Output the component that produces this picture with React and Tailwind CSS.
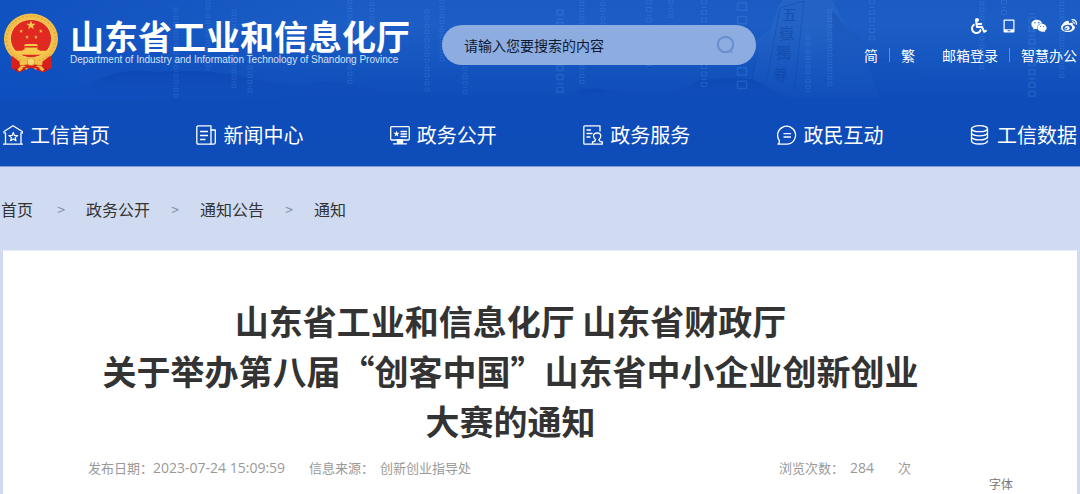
import { Fragment } from 'react';
import { FaWeibo, FaWeixin, FaWheelchair } from 'react-icons/fa';

const DIGIT_COLUMNS = [
  { x: 176, y: 8, h: 90, s: 4 },
  { x: 208, y: 0, h: 70, s: 4 },
  { x: 234, y: 10, h: 80, s: 4 },
  { x: 250, y: 60, h: 34, s: 4 },
  { x: 350, y: 0, h: 84, s: 4 },
  { x: 372, y: 0, h: 30, s: 4 },
  { x: 427, y: 10, h: 84, s: 4 },
  { x: 442, y: 0, h: 60, s: 4 },
  { x: 465, y: 30, h: 62, s: 4 },
  { x: 560, y: 10, h: 80, s: 6 },
  { x: 582, y: 0, h: 84, s: 4 },
  { x: 603, y: 0, h: 40, s: 4 },
  { x: 649, y: 0, h: 66, s: 5 },
  { x: 671, y: 0, h: 20, s: 4 },
  { x: 704, y: 0, h: 84, s: 5 },
  { x: 742, y: 3, h: 84, s: 9 },
  { x: 808, y: 36, h: 56, s: 4 },
  { x: 830, y: 10, h: 76, s: 4 },
  { x: 872, y: 0, h: 42, s: 5 },
  { x: 982, y: 2, h: 66, s: 4 },
  { x: 1004, y: 0, h: 18, s: 5 },
  { x: 1032, y: 14, h: 84, s: 6 },
  { x: 1062, y: 0, h: 76, s: 4 },
];

const STARS = [
  [30, 25, 5],
  [20, 31, 2],
  [40, 31, 2],
  [26, 37, 2],
  [35, 37, 2],
];

function starPoints(cx, cy, r) {
  const points = [];
  for (let i = 0; i < 10; i++) {
    const radius = i % 2 ? r * 0.42 : r;
    const angle = (Math.PI / 5) * i - Math.PI / 2;
    points.push(`${cx + radius * Math.cos(angle)},${cy + radius * Math.sin(angle)}`);
  }
  return points.join(' ');
}

// Rings and bars stacked down a column, like binary digits lying on their side
function digitPath({ x, y, h, s }) {
  let d = '';
  let top = y;
  for (let i = 0; top < y + h; i++) {
    if ((i + x) % 3 === 0) {
      d += `M${x - s / 2} ${top} h${s} `;
      top += s * 0.6;
    } else {
      d += `M${x - s / 2} ${top} h${s} v${s * 0.8} h${-s} Z `;
      top += s * 1.5;
    }
  }
  return d;
}

function HeaderBackdrop() {
  return (
    <svg
      className="absolute inset-0 h-full w-full"
      viewBox="0 0 1080 166"
      preserveAspectRatio="none"
      aria-hidden="true"
    >
      <defs>
        <linearGradient id="sky" x1="0" y1="0" x2="0" y2="1">
          <stop offset="0" stopColor="#1a5bc4" />
          <stop offset="0.15" stopColor="#1c5ec5" />
          <stop offset="0.6" stopColor="#0e4cba" />
          <stop offset="1" stopColor="#0e4cb8" />
        </linearGradient>
        <linearGradient id="left" x1="0" y1="0" x2="1" y2="0">
          <stop offset="0" stopColor="#0e4fc0" stopOpacity="0.8" />
          <stop offset="1" stopColor="#0e4fc0" stopOpacity="0" />
        </linearGradient>
        <linearGradient id="hill" x1="0" y1="0" x2="0" y2="1">
          <stop offset="0" stopColor="#0b43b0" stopOpacity="0.6" />
          <stop offset="1" stopColor="#0e4cb8" stopOpacity="0" />
        </linearGradient>
        <linearGradient id="rock" x1="0" y1="0" x2="0" y2="1">
          <stop offset="0" stopColor="#4079c6" stopOpacity="0.28" />
          <stop offset="1" stopColor="#2a68c4" stopOpacity="0.08" />
        </linearGradient>
      </defs>
      <rect width="1080" height="166" fill="url(#sky)" />
      <rect width="360" height="100" fill="url(#left)" />

      {/* Distant ridges */}
      <path d="M90 84 Q120 66 160 72 Q200 68 240 76 Q290 90 320 82 Q350 80 380 92 L400 100 H60 Z" fill="url(#hill)" />
      <path d="M570 98 Q580 86 600 89 Q625 94 650 99 Z" fill="url(#hill)" />
      <path d="M660 98 Q685 88 700 80 Q740 76 755 80 Q780 92 800 100 Z" fill="url(#hill)" />

      {/* Carved stone */}
      <path d="M756 40 L770 30 L779 5 L783 0 H832 L846 26 L858 40 L866 60 L880 98 H790 L754 80 Z" fill="url(#rock)" />
      <path d="M832 10 L846 26 L858 38 L866 60 Q890 54 906 66 Q926 66 950 98 H832 Z" fill="url(#hill)" opacity="0.6" />
      <path d="M780 8 L804 1 M804 1 L794 92 M766 84 L780 8 M758 52 L752 78" fill="none" stroke="#0d47b0" strokeWidth="1" opacity="0.5" />
      <g fill="#0c3f9f" opacity="0.5" fontSize="15" fontFamily="'Noto Sans CJK TC', sans-serif">
        <text x="782" y="20">五</text>
        <text x="779" y="39">嶽</text>
        <text x="776" y="58">獨</text>
        <text x="773" y="80">尊</text>
      </g>

      {/* Falling digits */}
      <g fill="none" stroke="#5da0e6" strokeOpacity="0.22">
        {DIGIT_COLUMNS.map((column) => (
          <path key={column.x} d={digitPath(column)} strokeWidth={column.s > 5 ? 1.5 : 1} />
        ))}
      </g>
    </svg>
  );
}

function Emblem() {
  return (
    <svg className="h-16 w-14 shrink-0" viewBox="2 10 57 64" role="img" aria-label="国徽">
      <path d="M11 53 L10 68 L18 73 L30 68 L43 73 L52 68 L50 53 Z" fill="#d81f1c" />
      <path d="M13 62 L16 71 M48 62 L45 71" stroke="#a50f12" strokeWidth="2" />
      <ellipse cx="30.500" cy="39" rx="27.500" ry="26" fill="#f2c14c" />
      <ellipse cx="30.500" cy="39" rx="25" ry="23.500" fill="none" stroke="#e6ab38" strokeWidth="2" strokeDasharray="2 2" />
      <ellipse cx="30.500" cy="38.500" rx="21" ry="19.500" fill="#e02a21" stroke="#f8d66d" strokeWidth="1" />
      {STARS.map(([x, y, r]) => (
        <polygon key={`${x}-${y}`} points={starPoints(x + 0.5, y, r)} fill="#f7c84a" />
      ))}
      <path d="M25 44 H36 L38 46 H23 Z M24 47 H37 V50 H24 Z M22 50 H39 V54 H22 Z" fill="#f7c84a" />
      <path d="M24 47.500 H37" stroke="#c9421f" strokeWidth="0.700" />
      <path d="M13 51 H48 Q44 55 41 55 H20 Q16 54 13 51 Z" fill="#f7c84a" />
      <path d="M11 56 Q18 62 24 65 L18 70 L10 68 Z M50 56 Q43 62 37 65 L43 70 L52 68 Z" fill="#d81f1c" />
      <path d="M19 64 L25 63 Q30 56 36 63 L42 64" fill="none" stroke="#f2c14c" strokeWidth="4" />
      <circle cx="30.500" cy="62" r="4" fill="#f8d66d" stroke="#dc9a2c" strokeWidth="1" />
      <path d="M18 71 Q22 65 27 69 M43 71 Q39 65 34 69" fill="none" stroke="#f2c14c" strokeWidth="3" />
      <path d="M22 69 Q30 65 39 69" fill="none" stroke="#d81f1c" strokeWidth="2" />
    </svg>
  );
}

function NavIcon({ children }) {
  return (
    <svg
      className="h-5 w-5 shrink-0"
      viewBox="0 0 20 20"
      fill="none"
      stroke="currentColor"
      strokeWidth="1.3"
      strokeLinejoin="round"
      strokeLinecap="round"
      aria-hidden="true"
    >
      {children}
    </svg>
  );
}

const NAV = [
  {
    label: '工信首页',
    icon: (
      <NavIcon>
        <path d="M1 8 V6.500 L10 0.700 L19.300 6.500 V8 M2.500 8 V19 M18 8 V19 M0.500 19.200 H19.500" />
        <polygon points={starPoints(10.3, 12, 4.6)} strokeWidth="1.2" />
      </NavIcon>
    ),
  },
  {
    label: '新闻中心',
    icon: (
      <NavIcon>
        <path d="M2.500 0.800 H15 V19.200 H2.500 Q0.800 19.200 0.800 17.500 V2.500 Q0.800 0.800 2.500 0.800 Z" />
        <path d="M15 5 H19.300 V17.500 Q19.300 19.200 17.600 19.200 H15 M4.500 6.500 H11.500 M4.500 10.500 H11.500 M4.500 14.500 H9" />
      </NavIcon>
    ),
  },
  {
    label: '政务公开',
    icon: (
      <NavIcon>
        <rect x="0.700" y="1.700" width="18.600" height="13.300" rx="1" />
        <polygon points={starPoints(6.5, 8.8, 3.2)} fill="currentColor" stroke="none" />
        <path d="M11 6.500 H16.500 M11 9 H16.500 M11 11.500 H16.500" />
        <path d="M7.500 15 H12.500 V18 H7.500 Z" fill="currentColor" />
        <path d="M3.500 18.800 H16.500" />
      </NavIcon>
    ),
  },
  {
    label: '政务服务',
    icon: (
      <NavIcon>
        <path d="M17 6 V0.800 H1.800 Q0.800 0.800 0.800 1.800 V18.200 Q0.800 19.200 1.800 19.200 H8.500 M4 5 H7.500 M4 8.500 H9 M4 12 H7" />
        <path d="M12.500 14.500 Q10.500 13 10.500 11 Q10.500 8 14.200 8 Q17.800 8 17.800 11 Q17.800 13 16 14.500 Q16 16.500 19.300 17 V19.200 H9.500 V17 Q12.500 16.500 12.500 14.500 Z" />
      </NavIcon>
    ),
  },
  {
    label: '政民互动',
    icon: (
      <NavIcon>
        <path d="M2.300 15.500 A9 9 0 1 1 10 19.200 H1 Q2.800 17.500 2.300 15.500" />
        <path d="M7 8.700 H13.500 M7 12 H13.500" />
      </NavIcon>
    ),
  },
  {
    label: '工信数据',
    icon: (
      <NavIcon>
        <ellipse cx="9.500" cy="3.700" rx="8" ry="3" />
        <path d="M1.500 3.700 V15.800 Q2 19 9.500 19 Q17 19 17.500 15.800 M17.500 3.700 V13 M1.500 8 Q2.500 10.800 9.500 10.800 Q16.500 10.800 17.500 8 M1.500 12 Q2.500 14.900 9.500 14.900 Q16.500 14.900 17.500 12" />
      </NavIcon>
    ),
  },
];

const CRUMBS = ['首页', '政务公开', '通知公告', '通知'];

function Divider() {
  return <span className="h-[14px] w-px bg-[#4f93d8]" />;
}

function Header() {
  return (
    <header className="relative border-b border-[#7d9cd8] bg-[#0e4cb8] text-white">
      <HeaderBackdrop />

      <div className="relative flex h-[104px] items-start px-[3px]">
        <div className="flex items-center gap-[11px] pt-[10px]">
          <Emblem />
          <div>
            <div className="text-[34px] leading-9 font-bold">山东省工业和信息化厅</div>
            <div className="font-['Liberation_Sans',sans-serif] text-[10px] leading-3 whitespace-nowrap text-[#d5e2f6]">
              Department of Industry and Information Technology of Shandong Province
            </div>
          </div>
        </div>

        <form className="mt-[25px] ml-8 flex h-10 w-[314px] items-center rounded-full bg-[#93b1e2]/95 pr-5 pl-[22px]">
          <input
            type="text"
            aria-label="搜索"
            placeholder="请输入您要搜索的内容"
            className="min-w-0 flex-1 bg-transparent text-sm text-black outline-none placeholder:text-[#0d1a33]"
          />
          <button type="button" aria-label="搜索" className="cursor-pointer text-[#6a8fd3]">
            <svg className="h-5 w-5" viewBox="0 0 20 20" fill="none" stroke="currentColor" strokeWidth="2.2">
              <circle cx="9.500" cy="9.500" r="7.700" />
              <path d="M13.500 15 L16 17.500" />
            </svg>
          </button>
        </form>

        <div className="ml-auto flex flex-col items-end pt-[18px]">
          <div className="flex gap-[14px] text-base">
            <a href="#accessible" aria-label="无障碍">
              <FaWheelchair />
            </a>
            <a href="#mobile" aria-label="移动版">
              <svg className="h-4 w-4" viewBox="0 0 16 16" aria-hidden="true">
                <path
                  fill="currentColor"
                  fillRule="evenodd"
                  d="M3.500 1.500 H12.500 Q13.500 1.500 13.500 2.500 V13.500 Q13.500 14.500 12.500 14.500 H3.500 Q2.500 14.500 2.500 13.500 V2.500 Q2.500 1.500 3.500 1.500 Z M3.700 2.700 V11.200 H12.300 V2.700 Z M6.500 12.300 V13.300 H9.500 V12.300 Z"
                />
              </svg>
            </a>
            <a href="#wechat" aria-label="微信">
              <FaWeixin />
            </a>
            <a href="#weibo" aria-label="微博">
              <FaWeibo />
            </a>
          </div>
          <div className="mt-[11px] flex items-center gap-[11px] text-sm">
            <a href="#simplified">简</a>
            <Divider />
            <a href="#traditional">繁</a>
            <a href="#mail" className="ml-4">
              邮箱登录
            </a>
            <Divider />
            <a href="#office">智慧办公</a>
          </div>
        </div>
      </div>

      <nav className="relative flex h-[62px] items-center justify-between px-[3px]">
        {NAV.map((item) => (
          <a key={item.label} href="#nav" className="flex items-center gap-[7px] text-xl">
            {item.icon}
            {item.label}
          </a>
        ))}
      </nav>
    </header>
  );
}

export default function App() {
  return (
    <div
      lang="zh-CN"
      className="flex min-h-screen flex-col bg-[#d0dbf2] font-['Noto_Sans_CJK_SC',sans-serif]"
    >
      <Header />

      <nav aria-label="面包屑" className="flex h-[83px] items-center px-px text-base text-[#333]">
        {CRUMBS.map((crumb, i) => (
          <Fragment key={crumb}>
            {i > 0 && <span className="w-[50px] text-center text-sm text-[#7f8aa5]">&gt;</span>}
            <a href="#crumb" className="first:mr-[3px]">
              {crumb}
            </a>
          </Fragment>
        ))}
      </nav>

      <main className="mx-[3px] flex-1 border-t border-[#e6ecf8] bg-white pt-[45px]">
        <h1 className="mr-[142px] ml-[83px] text-center text-[34px] leading-[50px] font-bold text-[#333]">
          山东省工业和信息化厅 山东省财政厅
          <br />
          关于举办第八届“创客中国”山东省中小企业创新创业
          <br />
          大赛的通知
        </h1>

        <div className="mt-3 mr-[166px] ml-[85px] flex items-baseline font-['Open_Sans','Noto_Sans_CJK_SC',sans-serif] text-[13px] leading-5 text-[#999]">
          <span>发布日期：</span>
          <span className="text-sm leading-5">2023-07-24 15:09:59</span>
          <span className="ml-6">信息来源：</span>
          <span className="ml-1.5">创新创业指导处</span>
          <span className="ml-auto">浏览次数：</span>
          <span className="ml-1.5 text-sm leading-5">284</span>
          <span className="ml-6">次</span>
        </div>
        <div className="mr-16 text-right text-xs leading-3 text-[#777]">字体</div>
      </main>
    </div>
  );
}
